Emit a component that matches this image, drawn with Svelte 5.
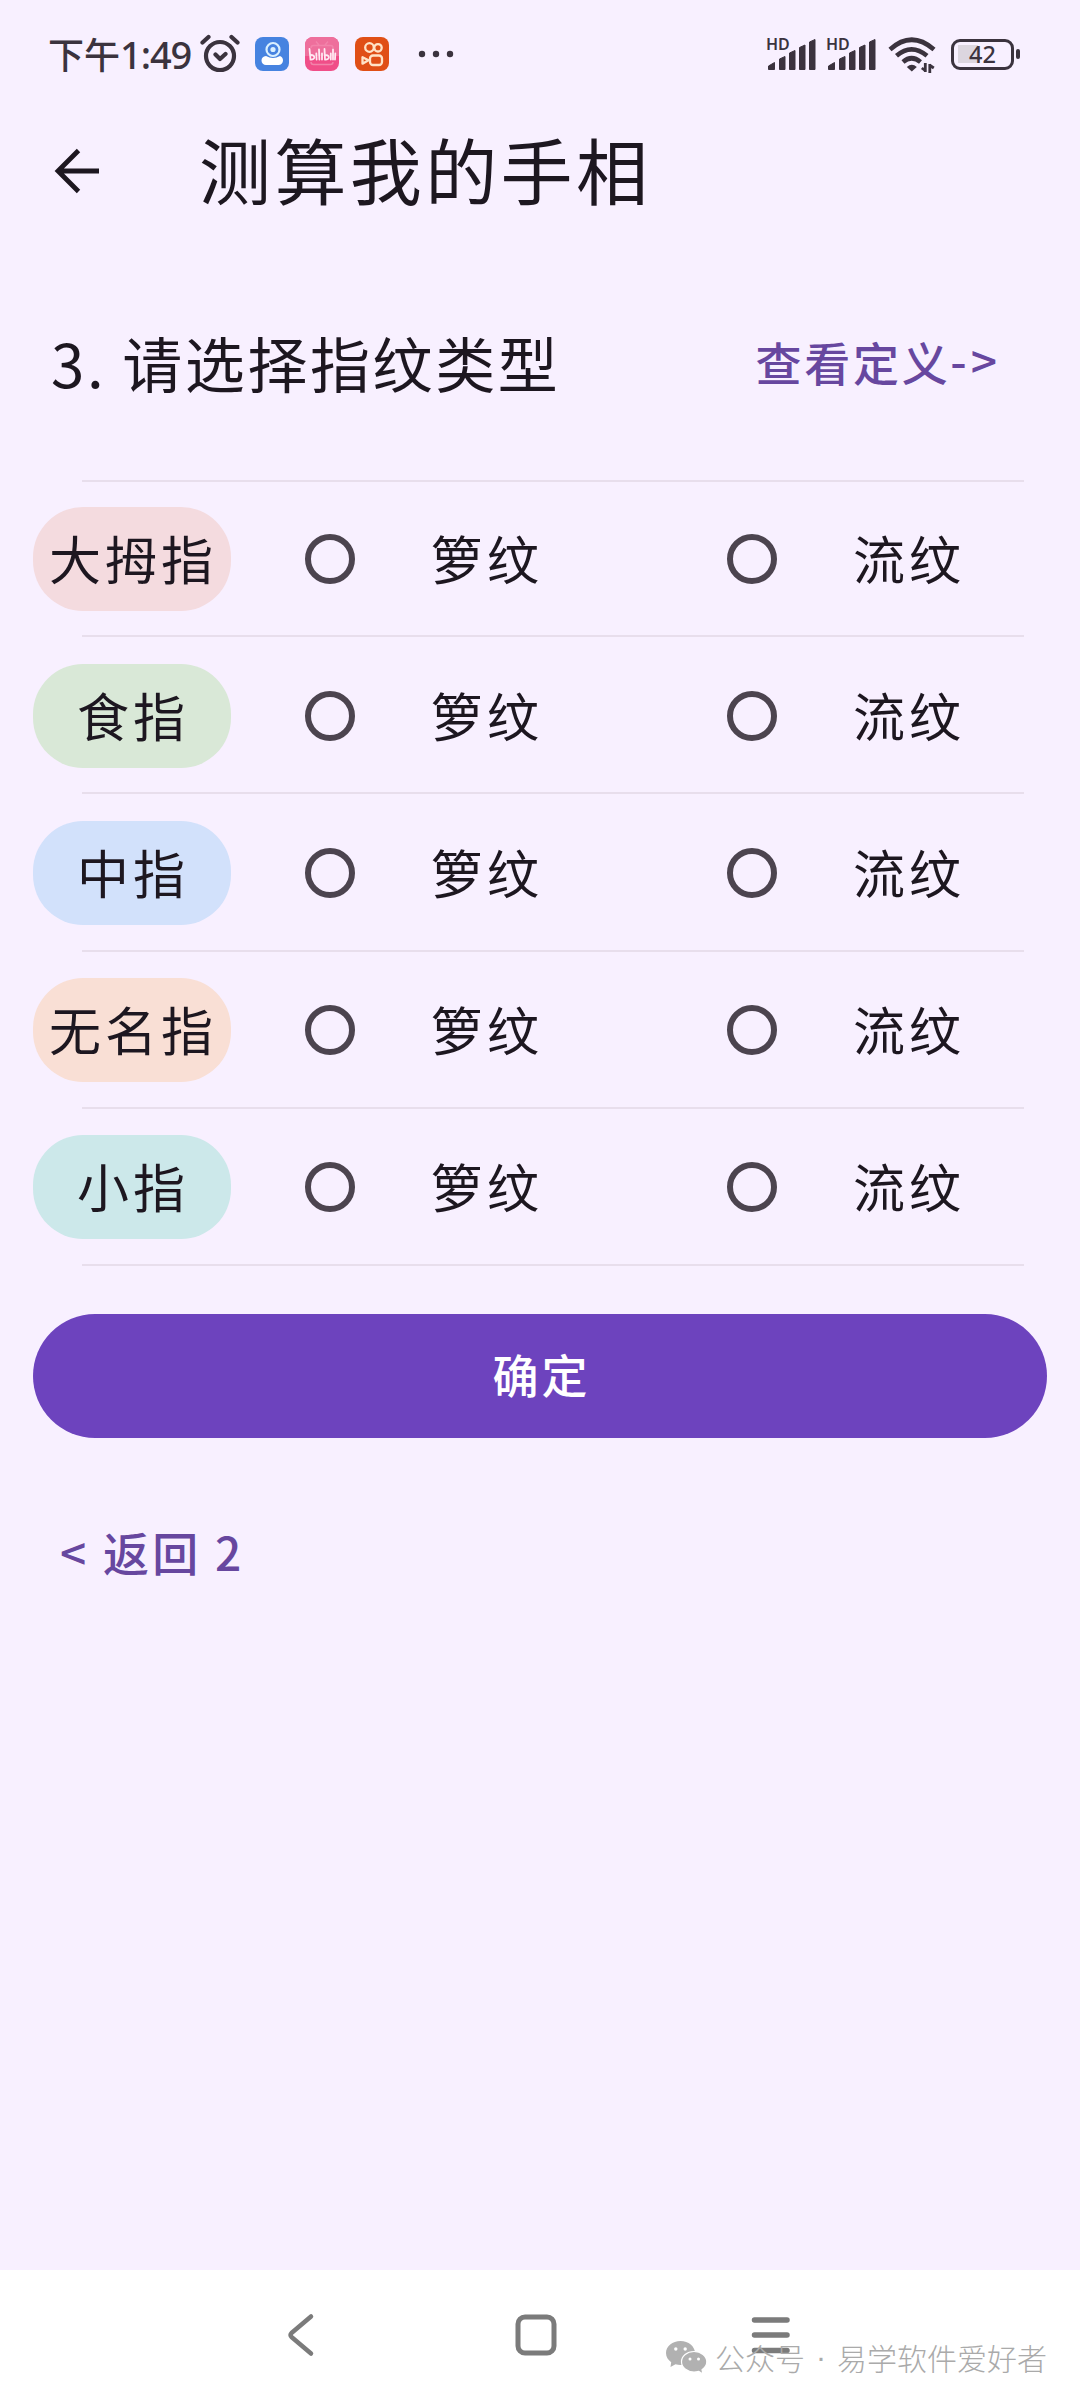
<script>
  const fingers = [
    { name: "大拇指", color: "thumb" },
    { name: "食指", color: "index" },
    { name: "中指", color: "middle" },
    { name: "无名指", color: "ring" },
    { name: "小指", color: "little" }
  ];
  const types = ["箩纹", "流纹"];

  let selected = $state({});
</script>

{#snippet signal()}
  <div class="signal">
    <svg width="52" height="36" viewBox="0 0 52 36">
      <path d="M2.500 33.500v-3.500l6-3.500v7zM13.500 33.500V23l5.500-2.500v13zM23.500 33.500V17l5.500-2.500v19zM33.500 33.500V11.500l5.500-2.500v24.500zM43.500 33.500V6L49 3.500v30z" stroke-width="1" stroke-linejoin="round" />
    </svg>
    <span>HD</span>
  </div>
{/snippet}

<div class="screen">
  <div class="statusBar">
    <span class="time">下午<b>1:49</b></span>
    <svg class="alarm" width="40" height="40" viewBox="0 0 40 40" fill="none" stroke="#3b333e" stroke-width="4.200" stroke-linecap="round" stroke-linejoin="round">
      <circle cx="20" cy="22" r="14" />
      <path d="M15.500 20.500l4.500 4.500 5.500-5M2.500 8.500l6-5.500M37.500 8.500l-6-5.500" />
    </svg>
    <svg class="app" width="34" height="34" viewBox="0 0 34 34">
      <rect width="34" height="34" rx="8" fill="#4683e0" />
      <path d="M11 19q7 4 14 0 3 1 3 4.500a4.500 4.500 0 0 1-4.500 4.500H11a4.500 4.500 0 0 1-4.500-4.500q0-4 4.500-4.500z" fill="#fff" />
      <circle cx="18" cy="12.500" r="6.500" fill="#4683e0" stroke="#d9f0ff" stroke-width="2.200" />
      <circle cx="18" cy="12.500" r="2.600" fill="#d9f0ff" />
    </svg>
    <svg class="app" width="34" height="34" viewBox="0 0 34 34">
      <rect width="34" height="34" rx="8" fill="#f04e88" />
      <path d="M0 19V8a8 8 0 0 1 8-8h18a8 8 0 0 1 8 8v11z" fill="#ee6f9c" />
      <path d="M11 4.500l3 3.500M23 4.500l-3 3.500M6 11q0-2.500 2.500-2.500h17q2.500 0 2.500 2.500M6 25q0 2.500 2.500 2.500h17q2.500 0 2.500-2.500" fill="none" stroke="#f283aa" stroke-width="1.400" />
      <g fill="none" stroke="#ffe9f2" stroke-width="1.800" stroke-linecap="round">
        <path d="M4.500 12l1 10.500c5 .5 5-4.500.5-4.500M11.300 16.500l.3 6M14 12.500l.4 10M17 16.500v6M19.500 12l.5 10.500c5 .5 5-4.500.5-4.500M25.800 16.500v6M28 12.500v10M30.300 16.500l-.3 6" />
      </g>
    </svg>
    <svg class="app" width="34" height="34" viewBox="0 0 34 34">
      <rect width="34" height="34" rx="8" fill="#e04f16" />
      <g fill="none" stroke="#ffe3c7" stroke-width="2.300" stroke-linejoin="round">
        <circle cx="14.500" cy="10.500" r="4.300" />
        <circle cx="23" cy="10.800" r="3.700" />
        <rect x="15" y="18.500" width="12" height="9.500" rx="3" />
        <path d="M13.500 23.200l-6-3v6.500z" />
      </g>
    </svg>
    <svg class="more" width="36" height="8" viewBox="0 0 36 8" fill="#3b333e">
      <circle cx="4" cy="4" r="3.200" />
      <circle cx="18" cy="4" r="3.200" />
      <circle cx="32" cy="4" r="3.200" />
    </svg>
    <span class="spacer"></span>
    {@render signal()}
    {@render signal()}
    <svg class="wifi" width="48" height="36" viewBox="0 0 48 36" fill="none" stroke="#3b333e" stroke-width="4.600">
      <path d="M2 12.500Q23.500-7 46 12.500M8.500 18.800q15-13 30.500 0M15 25q8.500-7.500 17.500 0" />
      <path d="M23.800 34.500l-5-4.500q5-4.500 10 0z" fill="#3b333e" stroke="none" />
      <path d="M37.300 26v9M41.800 36v-9M37.800 34l-4-3M41.300 28l4.500 3" stroke-width="2.800" />
    </svg>
    <div class="battery"><span>42</span></div>
    <i class="batteryTip"></i>
  </div>

  <div class="titleBar">
    <svg width="46" height="46" viewBox="0 0 46 46" fill="none" stroke="#1d1720" stroke-width="4.800">
      <path d="M45 23H4M24.500 2.500L4 23l20.500 20.500" />
    </svg>
    <h1>测算我的手相</h1>
  </div>

  <div class="question">
    <h2>3. 请选择指纹类型</h2>
    <span class="link">查看定义<span class="arrow">-&gt;</span></span>
  </div>

  <div class="fingers">
    {#each fingers as finger}
      <div class="row">
        <span class="pill {finger.color}">{finger.name}</span>
        {#each types as type}
          <label class="option">
            <input type="radio" name={finger.color} value={type} bind:group={selected[finger.color]} />
            <span>{type}</span>
          </label>
        {/each}
      </div>
    {/each}
  </div>

  <button class="confirm">确定</button>
  <span class="back">&lt; 返回 2</span>

  <div class="navBar">
    <svg width="30" height="44" viewBox="0 0 30 44" fill="none" stroke="#7b7b7b" stroke-width="4.500" stroke-linecap="round" stroke-linejoin="round">
      <path d="M25 3.500L5.500 20q-2 2 0 4L25 40.500" />
    </svg>
    <svg class="home" width="44" height="44" viewBox="0 0 44 44" fill="none" stroke="#7b7b7b" stroke-width="5">
      <rect x="4" y="4" width="36" height="36" rx="7" />
    </svg>
    <svg width="40" height="44" viewBox="0 0 40 44" stroke="#7b7b7b" stroke-width="5.500" stroke-linecap="round">
      <path d="M3.500 7h32.500M3.500 22h32.500M3.500 37.500h32.500" />
    </svg>
    <div class="watermark">
      <svg width="42" height="34" viewBox="0 0 42 34">
        <path d="M14.500 0C6.500 0 0 5.200 0 12c0 3.800 2 7 5.200 9.200L4.500 26l5-2.800q2.500.8 5 .8C22.500 24 29 18.500 29 12S22.500 0 14.500 0z" fill="#b1b1b1" />
        <path d="M28 10.500c-7 0-12.500 4.600-12.500 10.300S21 31 28 31q2.500 0 4.700-.7L37 33l-1-4.300c3-2 4.800-4.700 4.800-7.900 0-5.700-5.800-10.300-12.800-10.300z" fill="#b1b1b1" stroke="#fff" stroke-width="1.200" />
        <g fill="#fff">
          <circle cx="9.800" cy="8" r="1.700" />
          <circle cx="19.200" cy="8" r="1.700" />
          <circle cx="24" cy="18" r="1.500" />
          <circle cx="32.500" cy="18" r="1.500" />
        </g>
      </svg>
      <span>公众号</span>
      <span class="dot">·</span>
      <span>易学软件爱好者</span>
    </div>
  </div>
</div>

<style>
  :global(body) {
    background-color: #f8f0ff;
  }

  .screen {
    display: flex;
    flex-direction: column;
    box-sizing: border-box;
    width: 1080px;
    height: 2400px;
    overflow: hidden;
    color: #1d1720;
    background-color: #f8f0ff;
    font-family: "Noto Sans CJK SC", sans-serif;
  }

  svg {
    display: block;
    flex: 0 0 auto;
  }

  .statusBar {
    display: flex;
    align-items: center;
    height: 108px;
    padding: 0 60px 0 48px;
    color: #3b333e;
  }

  .time {
    display: flex;
    align-items: center;
    width: 152px;
    font-size: 36px;
    line-height: 40px;
    font-weight: 500;
    white-space: nowrap;
    padding-bottom: 3px;
  }

  .time b {
    font-family: "Noto Sans", "Noto Sans CJK SC", sans-serif;
    font-weight: 500;
    font-size: 38px;
    letter-spacing: -1.1px;
    margin-top: 2px;
  }

  .alarm {
    margin-right: 15px;
  }

  .app {
    margin-right: 16px;
  }

  .more {
    margin-left: 13px;
  }

  .spacer {
    flex: 1;
  }

  .signal {
    display: grid;
    margin-right: 8px;
    fill: #3b333e;
    stroke: #3b333e;
  }

  .signal svg,
  .signal span {
    grid-area: 1 / 1;
  }

  .signal span {
    font-family: "Noto Sans", sans-serif;
    font-size: 16px;
    line-height: 18px;
    font-weight: 600;
    margin-top: -1px;
  }

  .wifi {
    margin: 2px 15px 0 2px;
  }

  .battery {
    display: flex;
    align-items: center;
    justify-content: center;
    box-sizing: border-box;
    width: 63px;
    height: 31px;
    border: 3.5px solid #3b333e;
    border-radius: 9px;
    background: linear-gradient(#dcd6df, #dcd6df) 4px 3px / 20px 18px no-repeat;
    font-family: "Noto Sans", sans-serif;
    font-size: 23.5px;
    font-weight: 500;
    line-height: 24px;
  }

  .batteryTip {
    width: 4px;
    height: 10px;
    margin-left: 2px;
    border-radius: 2px;
    background-color: #3b333e;
  }

  .titleBar {
    display: flex;
    align-items: center;
    height: 126px;
    padding-left: 54px;
  }

  h1 {
    margin: 0 0 6px 99px;
    font-size: 72px;
    line-height: 80px;
    font-weight: 400;
    letter-spacing: 3.4px;
  }

  .question {
    display: flex;
    align-items: center;
    justify-content: space-between;
    box-sizing: border-box;
    height: 246px;
    padding: 10px 79px 0 51px;
  }

  h2 {
    margin: 0;
    font-size: 60px;
    line-height: 70px;
    font-weight: 400;
    letter-spacing: 2.6px;
  }

  .link {
    display: flex;
    padding-bottom: 3px;
    color: #67479f;
    font-size: 46px;
    line-height: 60px;
    font-weight: 500;
    letter-spacing: 2.7px;
  }

  .arrow {
    margin-top: -2px;
    letter-spacing: 4px;
  }

  .fingers {
    display: flex;
    flex-direction: column;
    height: 786px;
    background: linear-gradient(#e8deec, #e8deec) 82px 0 / 942px 2px no-repeat;
  }

  .row {
    display: flex;
    align-items: center;
    flex: 1;
    padding-left: 33px;
    background: linear-gradient(#e8deec, #e8deec) 82px 100% / 942px 2px no-repeat;
  }

  .pill {
    flex: 0 0 auto;
    box-sizing: border-box;
    width: 198px;
    height: 104px;
    margin-right: 74px;
    padding-left: 2px;
    border-radius: 50px;
    text-align: center;
    font-size: 52px;
    line-height: 101px;
    letter-spacing: 4px;
    white-space: nowrap;
  }

  .thumb {
    background-color: #f4dbdf;
  }

  .index {
    background-color: #d9e8d7;
  }

  .middle {
    background-color: #d2e1fb;
  }

  .ring {
    background-color: #f9dfd5;
  }

  .little {
    background-color: #cce8ea;
  }

  .option {
    display: flex;
    align-items: center;
    flex: 0 0 auto;
    width: 422px;
    font-size: 52px;
    line-height: 98px;
    letter-spacing: 4px;
  }

  .option span {
    padding-bottom: 2px;
  }

  .option input {
    appearance: none;
    box-sizing: border-box;
    width: 50px;
    height: 50px;
    margin: 0 76px 0 0;
    border: 6px solid #4c444f;
    border-radius: 50%;
  }

  .option input:checked {
    border-color: #6d43be;
    background: radial-gradient(#6d43be 45%, transparent 50%);
  }

  .confirm {
    width: 1014px;
    height: 124px;
    margin: 48px 0 0 33px;
    padding: 0 0 6px 3px;
    border: none;
    border-radius: 62px;
    color: #fff;
    background-color: #6d43be;
    font-family: inherit;
    font-size: 46px;
    font-weight: 500;
    letter-spacing: 3px;
  }

  .back {
    margin: 81px 0 0 60px;
    color: #67479f;
    font-size: 46px;
    line-height: 64px;
    font-weight: 500;
    letter-spacing: 3.2px;
  }

  .navBar {
    position: relative;
    display: flex;
    justify-content: space-between;
    box-sizing: border-box;
    height: 130px;
    margin-top: auto;
    padding: 43px 289px 0 286px;
    background-color: #fff;
  }

  .home {
    margin-left: 5px;
  }

  .watermark {
    position: absolute;
    right: 33px;
    bottom: 25px;
    display: flex;
    align-items: center;
    color: #aaa;
    font-size: 30px;
    font-weight: 300;
    line-height: 34px;
    white-space: nowrap;
  }

  .watermark svg {
    margin-right: 7px;
  }

  .watermark span {
    padding-bottom: 1px;
  }

  .watermark .dot {
    width: 32px;
    font-family: "Liberation Sans", sans-serif;
    text-align: center;
  }
</style>
